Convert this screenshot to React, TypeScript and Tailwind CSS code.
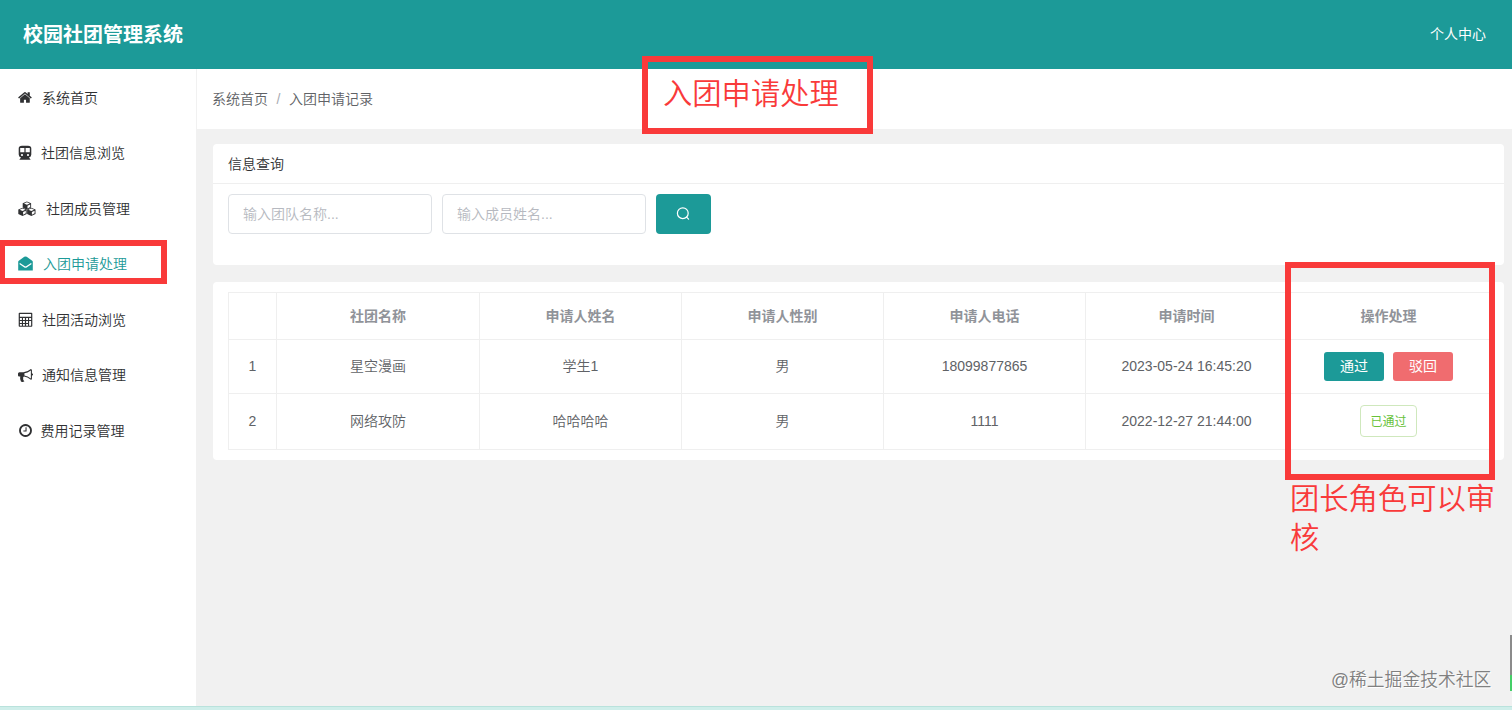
import type { ReactNode } from "react";

const HomeIcon = () => (
  <svg viewBox="0 0 1792 1792" className="h-[15px] w-[15px]" fill="currentColor">
    <path d="M1408 992v480q0 26-19 45t-45 19h-384v-384h-256v384h-384q-26 0-45-19t-19-45v-480q0-1 .5-3t.5-3l575-474 575 474q1 2 1 6zm223-69l-62 74q-8 9-21 11h-3q-13 0-21-7l-692-577-692 577q-12 8-24 7-13-2-21-11l-62-74q-8-10-7-23.500t11-21.500l719-599q32-26 76-26t76 26l244 204v-195q0-14 9-23t23-9h192q14 0 23 9t9 23v408l219 182q10 8 11 21.500t-7 23.500z" />
  </svg>
);

const SubwayIcon = () => (
  <svg viewBox="0 0 14 16" className="h-4 w-3.5" fill="currentColor">
    <path
      fillRule="evenodd"
      d="M4 .8h6q3.300 0 3.300 2.700v6q0 2.500-2.300 2.900l1.700 2.300h-11.400l1.700-2.300q-2.300-.4-2.300-2.900v-6q0-2.700 3.300-2.700zM2.200 3.100v4.200h4.200v-4.200zM7.600 3.100v4.200h4.200v-4.200zM4 8.900a1.100 1.100 0 1 0 0 2.200a1.100 1.100 0 1 0 0-2.200zM10 8.900a1.100 1.100 0 1 0 0 2.200a1.100 1.100 0 1 0 0-2.200z"
    />
  </svg>
);

const Cube = ({ x, y }: { x: number; y: number }) => (
  <g transform={`translate(${x} ${y})`}>
    <path d="M4.500 0L8.700 1.800V6.200L4.500 8.300L.3 6.200V1.800z" />
    <path d="M4.500 .9L7.400 2.100L4.500 3.400L1.600 2.100zM5.100 4.300L7.800 3.100V5.600L5.100 7z" fill="#fff" />
  </g>
);

const CubesIcon = () => (
  <svg viewBox="0 0 18 16" className="h-4 w-[18px]" fill="currentColor">
    <Cube x={4.400} y={0.4} />
    <Cube x={0} y={6.700} />
    <Cube x={8.800} y={6.700} />
  </svg>
);

const EnvelopeIcon = () => (
  <svg viewBox="0 0 15 16" className="h-4 w-[15px]" fill="currentColor">
    <path
      fillRule="evenodd"
      d="M.2 5.700Q.2 5.100 .8 4.700L6.300 .8Q7.500 0 8.700 .8L14.200 4.700Q14.800 5.100 14.800 5.700V14.600H.2zM2 7L1.300 7.900L6 11.200Q7.500 12.200 9 11.200L13.700 7.900L13 7L8.500 10.100Q7.500 10.800 6.500 10.100z"
    />
  </svg>
);

const CalculatorIcon = () => (
  <svg viewBox="0 0 15 16" className="h-4 w-[15px]" fill="currentColor">
    <path
      fillRule="evenodd"
      d="M1.500 .8H13.500Q14.300 .8 14.300 1.600V14Q14.300 14.800 13.500 14.800H1.500Q.7 14.800 .7 14V1.600Q.7 .8 1.500 .8zM1.900 2V4.700H13.100V2zM1.900 6V8H3.900V6zM5 6V8H6.900V6zM8.100 6V8H10V6zM11.100 6V8H13.100V6zM1.900 9V10.900H3.900V9zM5 9V10.900H6.900V9zM8.100 9V10.900H10V9zM1.900 11.900V13.700H3.900V11.900zM5 11.900V13.700H6.900V11.900zM8.100 11.900V13.700H10V11.900zM11.100 9V13.700H13.100V9z"
    />
  </svg>
);

const BullhornIcon = () => (
  <svg viewBox="0 0 1792 1792" className="h-[15px] w-[15px]" fill="currentColor">
    <path d="M1664 640q53 0 90.500 37.500t37.500 90.500-37.500 90.500-90.500 37.500v384q0 52-38 90t-90 38q-417-347-812-380-58 19-91 66t-31 100.500 40 92.500q-20 33-23 65.500t6 58 33.500 55 48 50 61.500 50.500q-29 58-111.500 83t-168.500 11.500-132-55.500q-7-23-29.500-87.500t-32-94.500-23-89-15-101 3.500-98.500 22-110.500h-122q-66 0-113-47t-47-113v-192q0-66 47-113t113-47h480q435 0 896-384 52 0 90 38t38 90v384zm-128 604v-954q-394 302-768 343v270q377 42 768 341z" />
  </svg>
);

const ClockIcon = () => (
  <svg viewBox="0 0 1792 1792" className="h-[15px] w-[15px]" fill="currentColor">
    <path d="M1024 544v448q0 14-9 23t-23 9h-320q-14 0-23-9t-9-23v-64q0-14 9-23t23-9h224v-352q0-14 9-23t23-9h64q14 0 23 9t9 23zm416 352q0-148-73-273t-198-198-273-73-273 73-198 198-73 273 73 273 198 198 273 73 273-73 198-198 73-273zm224 0q0 209-103 385.500t-279.500 279.500-385.500 103-385.500-103-279.500-279.500-103-385.500 103-385.500 279.500-279.500 385.500-103 385.500 103 279.500 279.500 103 385.500z" />
  </svg>
);

const SearchIcon = () => (
  <svg viewBox="0 0 14 14" className="h-3.5 w-3.5" fill="none" stroke="currentColor" strokeWidth="1.2">
    <circle cx="6.800" cy="6.200" r="5.400" />
    <path d="M10.600 10.200L12.600 12.200" strokeLinecap="round" />
  </svg>
);

type MenuItem = { label: string; icon: ReactNode; gap: string; active?: boolean };

const menu: MenuItem[] = [
  { label: "系统首页", icon: <HomeIcon />, gap: "gap-[9px]" },
  { label: "社团信息浏览", icon: <SubwayIcon />, gap: "gap-[9px]" },
  { label: "社团成员管理", icon: <CubesIcon />, gap: "gap-2.5" },
  { label: "入团申请处理", icon: <EnvelopeIcon />, gap: "gap-2.5", active: true },
  { label: "社团活动浏览", icon: <CalculatorIcon />, gap: "gap-[9px]" },
  { label: "通知信息管理", icon: <BullhornIcon />, gap: "gap-[9px]" },
  { label: "费用记录管理", icon: <ClockIcon />, gap: "gap-[7.500px]" },
];

const columns = ["", "社团名称", "申请人姓名", "申请人性别", "申请人电话", "申请时间", "操作处理"];

const rows = [
  ["1", "星空漫画", "学生1", "男", "18099877865", "2023-05-24 16:45:20"],
  ["2", "网络攻防", "哈哈哈哈", "男", "1111", "2022-12-27 21:44:00"],
];

export default function App() {
  return (
    <div className="relative flex h-[710px] w-[1512px] flex-col overflow-hidden bg-[#f1f1f1] font-['Liberation_Sans','Noto_Sans_CJK_SC',sans-serif] text-sm font-[350] text-[#303133]">
      <header className="flex h-[69px] shrink-0 items-center justify-between bg-[#1c9a98] pr-[26px] pl-[23px] text-white">
        <h1 className="text-xl font-bold">校园社团管理系统</h1>
        <span className="pb-0.5 font-normal">个人中心</span>
      </header>

      <div className="flex min-h-0 flex-1">
        <nav className="w-[197px] shrink-0 border-r border-[#f1f1f1] bg-white pt-px">
          {menu.map((item) => (
            <div
              key={item.label}
              className={`flex h-[55.500px] items-center pl-[18px] ${item.gap} ${item.active ? "text-[#1c9a98]" : ""}`}
            >
              {item.icon}
              <span>{item.label}</span>
            </div>
          ))}
        </nav>

        <main className="min-w-0 flex-1">
          <div className="flex h-[60px] items-center bg-white pl-[15px] text-[#606266]">
            <span>系统首页</span>
            <span className="px-[8.500px] text-[#a8abb2]">/</span>
            <span>入团申请记录</span>
          </div>

          <div className="flex flex-col gap-[17px] pt-[15px] pr-2 pl-4">
            <section className="h-[121px] rounded-sm bg-white">
              <div className="flex h-10 items-center border-b border-[#efefef] px-[15px]">信息查询</div>
              <div className="flex gap-2.5 px-[15px] pt-2.5">
                <input
                  className="h-10 w-[204px] rounded-sm border border-[#dfe2e6] px-3.5 outline-none placeholder:text-[#b6b9c0]"
                  placeholder="输入团队名称..."
                />
                <input
                  className="h-10 w-[204px] rounded-sm border border-[#dfe2e6] px-3.5 outline-none placeholder:text-[#b6b9c0]"
                  placeholder="输入成员姓名..."
                />
                <button className="flex h-10 w-[54.500px] items-center justify-center rounded-sm bg-[#1c9a98] text-white">
                  <SearchIcon />
                </button>
              </div>
            </section>

            <section className="h-[178px] rounded-sm bg-white px-[15px] pt-2.5">
              <table className="w-[1262px] table-fixed border-collapse text-center text-[#606266]">
                <colgroup>
                  <col className="w-12" />
                  <col className="w-[203px]" />
                  <col className="w-[202px]" />
                  <col className="w-[202px]" />
                  <col className="w-[202px]" />
                  <col className="w-[202px]" />
                  <col />
                </colgroup>
                <thead>
                  <tr className="h-[47px]">
                    {columns.map((name, i) => (
                      <th key={i} className="border border-[#efefef] p-0 font-bold text-[#909399]">
                        {name}
                      </th>
                    ))}
                  </tr>
                </thead>
                <tbody>
                  {rows.map((row, r) => (
                    <tr key={row[0]} className={r === 0 ? "h-[54px]" : "h-14"}>
                      {row.map((cell, i) => (
                        <td key={i} className="border border-[#efefef] p-0 pb-0.5">
                          {cell}
                        </td>
                      ))}
                      <td className="border border-[#efefef] p-0">
                        {r === 0 ? (
                          <div className="flex justify-center gap-[9px] font-normal text-white">
                            <button className="h-[29px] w-[60px] rounded-[3px] bg-[#1c9a98] pb-0.5">通过</button>
                            <button className="h-[29px] w-[60px] rounded-[3px] bg-[#f06c6f] pb-0.5">驳回</button>
                          </div>
                        ) : (
                          <span className="mx-auto mb-px flex h-8 w-[57px] items-center justify-center rounded border border-[#cfe8bd] pt-px text-xs font-normal text-[#67c23a]">
                            已通过
                          </span>
                        )}
                      </td>
                    </tr>
                  ))}
                </tbody>
              </table>
            </section>
          </div>
        </main>
      </div>

      <footer className="h-1 shrink-0 border-t border-[#b9e2dc] bg-[#cfeeea]" />

      <div className="absolute top-[56px] left-[642px] h-[78px] w-[231px] border-[6px] border-[#f93a3a] pt-[10px] pl-[15px] text-[29.300px] leading-[44px] font-[350] whitespace-nowrap text-[#f93a3a]">
        入团申请处理
      </div>
      <div className="absolute top-[240px] -left-px h-11 w-[168px] border-[6px] border-[#f93a3a]" />
      <div className="absolute top-[262px] left-[1285px] h-[218px] w-[210px] border-[6px] border-[#f93a3a]" />
      <p className="absolute top-[479px] left-[1290px] w-[208px] text-[29.300px] leading-[39px] font-[350] text-[#f93a3a]">
        团长角色可以审核
      </p>
      <span className="absolute top-[668px] left-[1331px] text-[17.800px] leading-6 whitespace-nowrap text-[#808080] [text-shadow:1px_1px_0_#fff]">
        @稀土掘金技术社区
      </span>
      <div className="absolute top-[635px] left-[1510px] h-10 w-0.5 bg-[#8b8b8b]" />
      <div className="absolute top-[675px] left-[1510px] h-4 w-0.5 bg-[#45cf68]" />
    </div>
  );
}
